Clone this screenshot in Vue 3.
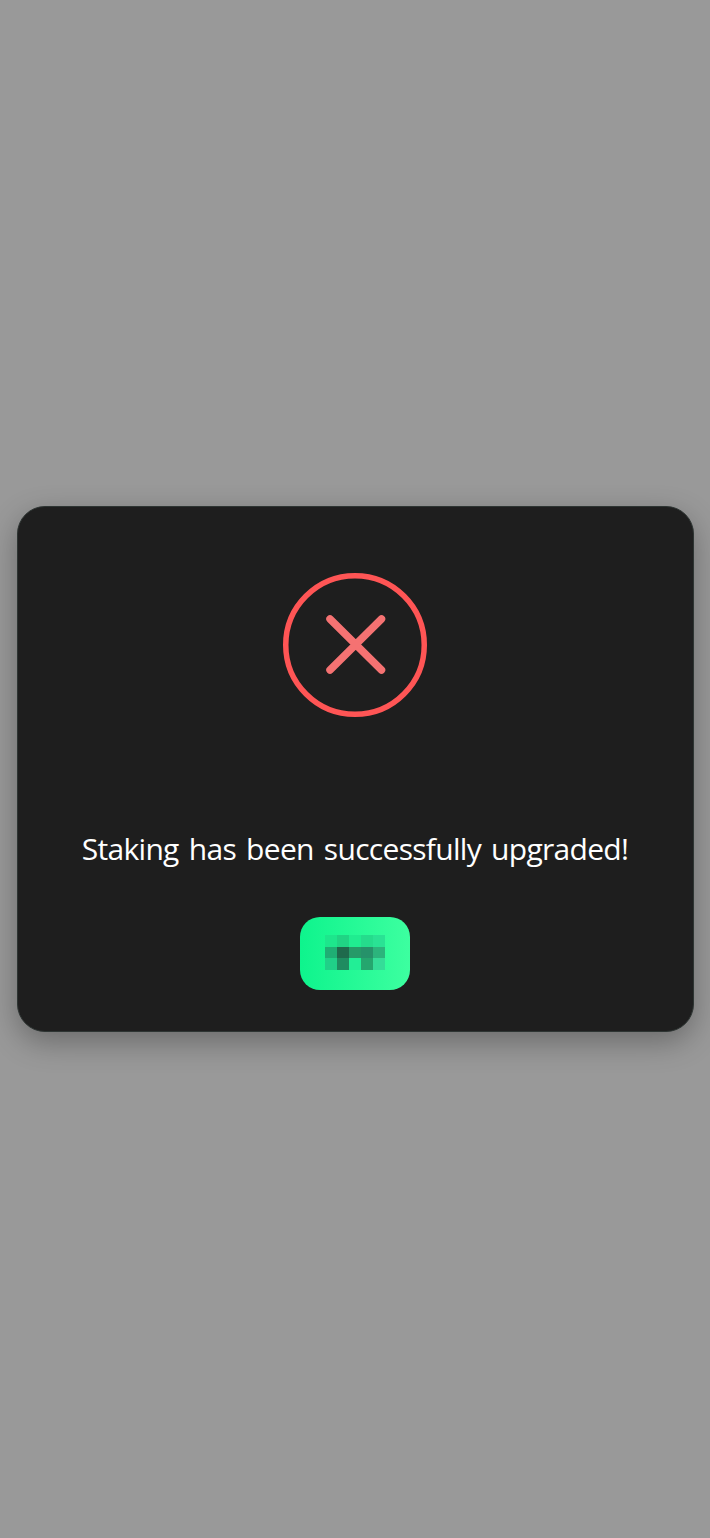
<script setup>
const cells = [
  '#1de68c', '#20d484', '#20ec90', '#25dc8c', '#2ae294',
  '#1fae74', '#1f6a4c', '#269a68', '#26926a', '#2cb47c',
  '#20d088', '#1f8c60', '#22ee96', '#25a66e', '#35dc98'
]
</script>

<template>
  <div class="overlay">
    <div class="modal">
      <svg class="status-icon" width="144" height="144" viewBox="0 0 144 144" aria-hidden="true">
        <circle cx="72" cy="72" r="69.25" fill="none" stroke="#ff5555" stroke-width="5.5" />
        <path d="M47 46 L98.5 97 M98.5 46 L47 97" fill="none" stroke="#f57272" stroke-width="7.5" stroke-linecap="round" />
      </svg>
      <p class="message">Staking has been successfully upgraded!</p>
      <button class="confirm" type="button" aria-label="Confirm">
        <span class="mosaic">
          <i v-for="(color, i) in cells" :key="i" :style="{ background: color }"></i>
        </span>
      </button>
    </div>
  </div>
</template>

<style>
html, body { margin: 0; background: #999; }
</style>

<style scoped>
.overlay {
  min-height: 1538px;
  background: #999;
  display: flex;
  align-items: center;
  padding-left: 17px;
  box-sizing: border-box;
}
.modal {
  width: 677px;
  height: 526px;
  box-sizing: border-box;
  background: #1e1e1e;
  border: 1px solid #2e3533;
  border-radius: 28px;
  box-shadow: 0 10px 30px rgba(0, 0, 0, 0.3);
  display: flex;
  flex-direction: column;
  align-items: center;
  padding: 66px 1px 0 0;
}
.status-icon { display: block; }
.message {
  margin: 112px 0 0;
  font-family: "Open Sans", "Noto Sans", sans-serif;
  font-size: 30px;
  line-height: 40px;
  letter-spacing: -0.7px;
  word-spacing: 3px;
  color: #fff;
  white-space: nowrap;
}
.confirm {
  margin-top: 48px;
  width: 110px;
  height: 73px;
  border: 0;
  padding: 0 0 2px;
  border-radius: 20px;
  background: linear-gradient(90deg, #0ef48d 0%, #3dffa0 100%);
  display: flex;
  align-items: center;
  justify-content: center;
}
.mosaic {
  display: grid;
  grid-template-columns: repeat(5, 12px);
  grid-template-rows: repeat(3, 11.67px);
}
.mosaic i { display: block; }
</style>
